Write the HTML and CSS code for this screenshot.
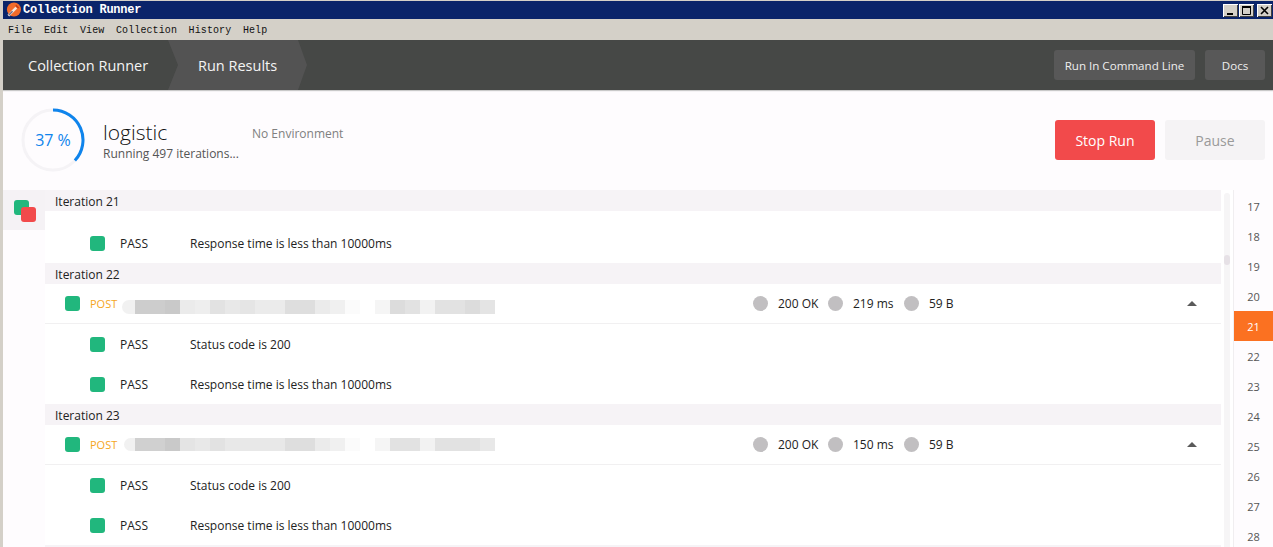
FILE: index.html
```html
<!DOCTYPE html>
<html lang="en">
<head>
<meta charset="utf-8">
<title>Collection Runner</title>
<link rel="stylesheet" href="styles.css">
</head>
<body>
<div class="window">
  <div class="titlebar">
    <svg class="app-logo" viewBox="0 0 16 16" aria-hidden="true">
      <circle cx="8.5" cy="7.5" r="7.5" fill="#f26b2a"/>
      <path d="M2.5 14 L11 5.5" stroke="#f5e6da" stroke-width="2.6"/>
      <path d="M3 13.4 L7 9.4" stroke="#76687e" stroke-width="1.5"/>
      <path d="M10.5 3 L13.5 6" stroke="#c23a17" stroke-width="1.5"/>
    </svg>
    <span class="title-text">Collection Runner</span>
    <div class="win-controls">
      <span class="win-btn"><svg viewBox="0 0 15 13" aria-hidden="true"><path d="M4 9h6v2H4z" fill="#000"/></svg></span>
      <span class="win-btn"><svg viewBox="0 0 15 13" aria-hidden="true"><path d="M3.5 2.5h8v8h-8z" fill="none" stroke="#000"/><path d="M3 2h9v2H3z" fill="#000"/></svg></span>
      <span class="win-btn win-close"><svg viewBox="0 0 15 13" aria-hidden="true"><path d="M4 3l7 7M11 3l-7 7" stroke="#000" stroke-width="1.6"/></svg></span>
    </div>
  </div>
  <div class="menubar">
    <span>File</span><span>Edit</span><span>View</span><span>Collection</span><span>History</span><span>Help</span>
  </div>
  <header class="appbar">
    <div class="crumb">Collection Runner</div>
    <div class="crumb crumb-active">Run Results</div>
    <div class="appbar-actions">
      <button class="dark-btn">Run In Command Line</button>
      <button class="dark-btn dark-btn-docs">Docs</button>
    </div>
  </header>
  <section class="run-head">
    <div class="progress">
      <svg viewBox="0 0 64 64" aria-hidden="true">
        <circle cx="32" cy="32" r="30" fill="none" stroke="#f5f3f6" stroke-width="3"/>
        <path d="M32 2 A30 30 0 0 1 53.9 52.5" fill="none" stroke="#0f84ec" stroke-width="3"/>
      </svg>
      <span class="progress-label">37 %</span>
    </div>
    <div class="run-name">
      <div class="run-title">logistic</div>
      <div class="run-sub">Running 497 iterations...</div>
    </div>
    <div class="run-env">No Environment</div>
    <div class="run-actions">
      <button class="btn-stop">Stop Run</button>
      <button class="btn-pause">Pause</button>
    </div>
  </section>
  <div class="body">
    <aside class="rail">
      <div class="rail-item">
        <span class="sq sq-back"></span>
        <span class="sq sq-front"></span>
      </div>
    </aside>
    <main class="results">
      <div class="list">
        <div class="band">Iteration 21</div>
        <div class="pass pass-first"><span class="sq"></span><span class="pass-label">PASS</span><span>Response time is less than 10000ms</span></div>

        <div class="band">Iteration 22</div>
        <div class="req">
          <span class="sq"></span><span class="method">POST</span>
          <span class="blur"></span>
          <div class="stats">
            <span class="dot"></span><span class="stat stat-code">200 OK</span>
            <span class="dot"></span><span class="stat stat-time">219 ms</span>
            <span class="dot"></span><span class="stat stat-size">59 B</span>
          </div>
          <span class="caret"></span>
        </div>
        <div class="pass"><span class="sq"></span><span class="pass-label">PASS</span><span>Status code is 200</span></div>
        <div class="pass"><span class="sq"></span><span class="pass-label">PASS</span><span>Response time is less than 10000ms</span></div>

        <div class="band">Iteration 23</div>
        <div class="req">
          <span class="sq"></span><span class="method">POST</span>
          <span class="blur blur-alt"></span>
          <div class="stats">
            <span class="dot"></span><span class="stat stat-code">200 OK</span>
            <span class="dot"></span><span class="stat stat-time">150 ms</span>
            <span class="dot"></span><span class="stat stat-size">59 B</span>
          </div>
          <span class="caret"></span>
        </div>
        <div class="pass"><span class="sq"></span><span class="pass-label">PASS</span><span>Status code is 200</span></div>
        <div class="pass"><span class="sq"></span><span class="pass-label">PASS</span><span>Response time is less than 10000ms</span></div>

        <div class="band"></div>
      </div>
      <div class="scrolltrack"><span class="scrollthumb"></span></div>
    </main>
    <nav class="iters">
      <a>17</a><a>18</a><a>19</a><a>20</a><a class="current">21</a><a>22</a><a>23</a><a>24</a><a>25</a><a>26</a><a>27</a><a>28</a>
    </nav>
  </div>
</div>
</body>
</html>
```
FILE: styles.css
```css
* { box-sizing: border-box; }
html, body { margin: 0; height: 100%; overflow: hidden; }
body { font-family: "Open Sans", sans-serif; font-size: 12px; color: #222; background: #d4d0c8; }
button { font-family: inherit; border: 0; padding: 0; cursor: default; }

.window { height: 547px; display: flex; flex-direction: column; padding: 1px 0 0 3px; overflow: hidden; }

.titlebar { height: 18px; flex: none; background: #0a246a; display: flex; align-items: center; padding-left: 3px; }
.app-logo { width: 15px; height: 16px; flex: none; }
.title-text { margin-left: 2px; font-family: "Liberation Mono", monospace; font-size: 12px; font-weight: 700; letter-spacing: -0.25px; color: #fff; }
.win-controls { margin-left: auto; display: flex; padding-right: 1px; }
.win-btn { width: 15px; height: 13px; background: #d4d0c8; box-shadow: inset 1px 1px 0 #fff, inset -1px -1px 0 #404040; display: block; margin-left: 1px; }
.win-close { margin-left: 3px; }
.win-btn svg { display: block; width: 15px; height: 13px; }

.menubar { height: 21px; flex: none; background: #d4d0c8; display: flex; align-items: center; padding: 2px 0 0 5px; font-family: "Liberation Mono", monospace; font-size: 10px; letter-spacing: 0.1px; color: #111; gap: 11.6px; }

.appbar { position: relative; height: 50px; flex: none; background: #464846; display: flex; align-items: stretch; box-shadow: 0 1px 1px #c9c9c9; color: #fff; font-size: 14.5px; }
.crumb { display: flex; align-items: center; width: 165px; padding-left: 25px; color: #f4f4f4; }
.crumb-active { width: 140px; padding-left: 30px; background: #535353; clip-path: polygon(0 0, 130px 0, 139px 50%, 130px 100%, 0 100%, 10px 50%); }
.appbar-actions { margin-left: auto; display: flex; align-items: center; gap: 10px; padding-right: 8px; }
.dark-btn { height: 30px; width: 141px; background: #585858; color: #eee; border-radius: 3px; font-size: 11.6px; }
.dark-btn-docs { width: 60px; }

.run-head { height: 100px; flex: none; background: #fefcfe; display: flex; align-items: center; padding-left: 18px; }
.progress { position: relative; width: 64px; height: 64px; flex: none; display: flex; align-items: center; justify-content: center; color: #0f84ec; font-size: 16px; }
.progress svg { position: absolute; inset: 0; width: 64px; height: 64px; }
.run-name { margin-left: 18px; width: 149px; padding-top: 2px; }
.run-title { font-size: 21px; line-height: 26px; color: #111; font-weight: 300; margin-top: -2px; }
.run-sub { font-size: 12px; line-height: 17px; color: #555; }
.run-env { color: #808080; margin-top: -14px; }
.run-actions { margin-left: auto; display: flex; gap: 10px; padding-right: 8px; }
.btn-stop, .btn-pause { width: 100px; height: 40px; border-radius: 3px; font-size: 14px; }
.btn-stop { background: #f24a4b; color: #fff; }
.btn-pause { background: #f5f3f5; color: #9a9a9a; }

.body { flex: 1; min-height: 0; display: flex; background: #fefcfe; }
.rail { width: 42px; flex: none; }
.rail-item { position: relative; height: 40px; background: #f5f2f5; }
.sq { display: block; width: 15px; height: 15px; border-radius: 3px; background: #21b77d; flex: none; }
.sq-back { position: absolute; left: 11px; top: 10px; }
.sq-front { position: absolute; left: 18px; top: 17px; background: #f24a4b; }

.results { flex: 1; min-width: 0; display: flex; background: #fff; }
.list { width: 1176px; flex: none; }
.band { height: 21px; line-height: 21px; padding: 1px 0 0 10px; background: #f6f3f6; color: #222; }
.pass { height: 40px; display: flex; align-items: center; padding-left: 45px; color: #222; }
.pass-first { height: 52px; padding-top: 12px; }
.pass-label { width: 70px; margin-left: 15px; }
.req { height: 40px; display: flex; align-items: center; padding-left: 20px; border-bottom: 1px solid #f1f0f1; }
.method { width: 32px; margin-left: 10px; color: #f5a623; font-size: 11px; }
.blur { display: block; width: 373px; height: 14px; margin-top: 7px; border-radius: 8px 0 0 8px;
  background: linear-gradient(90deg, #f1f1f1 0 13px, #cdcdcd 13px 43px, #c9c9c9 43px 58px, #ebebeb 58px 73px, #eeeeee 73px 88px, #e2e2e2 88px 103px, #e8e8e8 103px 118px, #e5e5e5 118px 133px, #ebebeb 133px 163px, #dedede 163px 193px, #ebebeb 193px 208px, #f0f0f0 208px 223px, #fbfbfb 223px 238px, #fff 238px 253px, #f5f5f5 253px 268px, #dcdcdc 268px 283px, #e2e2e2 283px 298px, #f2f2f2 298px 313px, #e2e2e2 313px 343px, #dcdcdc 343px 358px, #e4e4e4 358px 373px); }
.blur-alt { margin: 0 0 0 2px; width: 371px; height: 13px;
  background: linear-gradient(90deg, #f1f1f1 0 11px, #d0d0d0 11px 41px, #c9c9c9 41px 56px, #e4e4e4 56px 71px, #e8e8e8 71px 86px, #e2e2e2 86px 101px, #e8e8e8 101px 161px, #dedede 161px 191px, #ebebeb 191px 206px, #f0f0f0 206px 221px, #fbfbfb 221px 236px, #fff 236px 251px, #f5f5f5 251px 266px, #e2e2e2 266px 296px, #f2f2f2 296px 311px, #e2e2e2 311px 356px, #e8e8e8 356px 371px); }
.stats { position: absolute; display: flex; align-items: center; left: 753px; }
.dot { display: block; width: 15px; height: 15px; border-radius: 50%; background: #c1bfc1; flex: none; }
.stat { margin-left: 10px; color: #222; }
.stat-code { width: 50px; }
.stat-time { width: 51px; }
.caret { position: absolute; left: 1187px; width: 0; height: 0; border-left: 5px solid transparent; border-right: 5px solid transparent; border-bottom: 5px solid #5a5a5a; }

.scrolltrack { position: relative; width: 6px; height: 100%; margin: 3px 0 0 3px; background: #f6f5f6; border-radius: 3px 3px 0 0; flex: none; }
.scrollthumb { position: absolute; left: 0; top: 62px; width: 6px; height: 10px; border-radius: 3px; background: #e6e1e6; }

.iters { width: 40px; flex: none; border-left: 1px solid #f0eef0; padding-top: 1px; color: #555; }
.iters a { display: flex; height: 30px; align-items: center; justify-content: center; font-size: 11px; }
.iters .current { background: #fb7121; color: #fff; }
```
